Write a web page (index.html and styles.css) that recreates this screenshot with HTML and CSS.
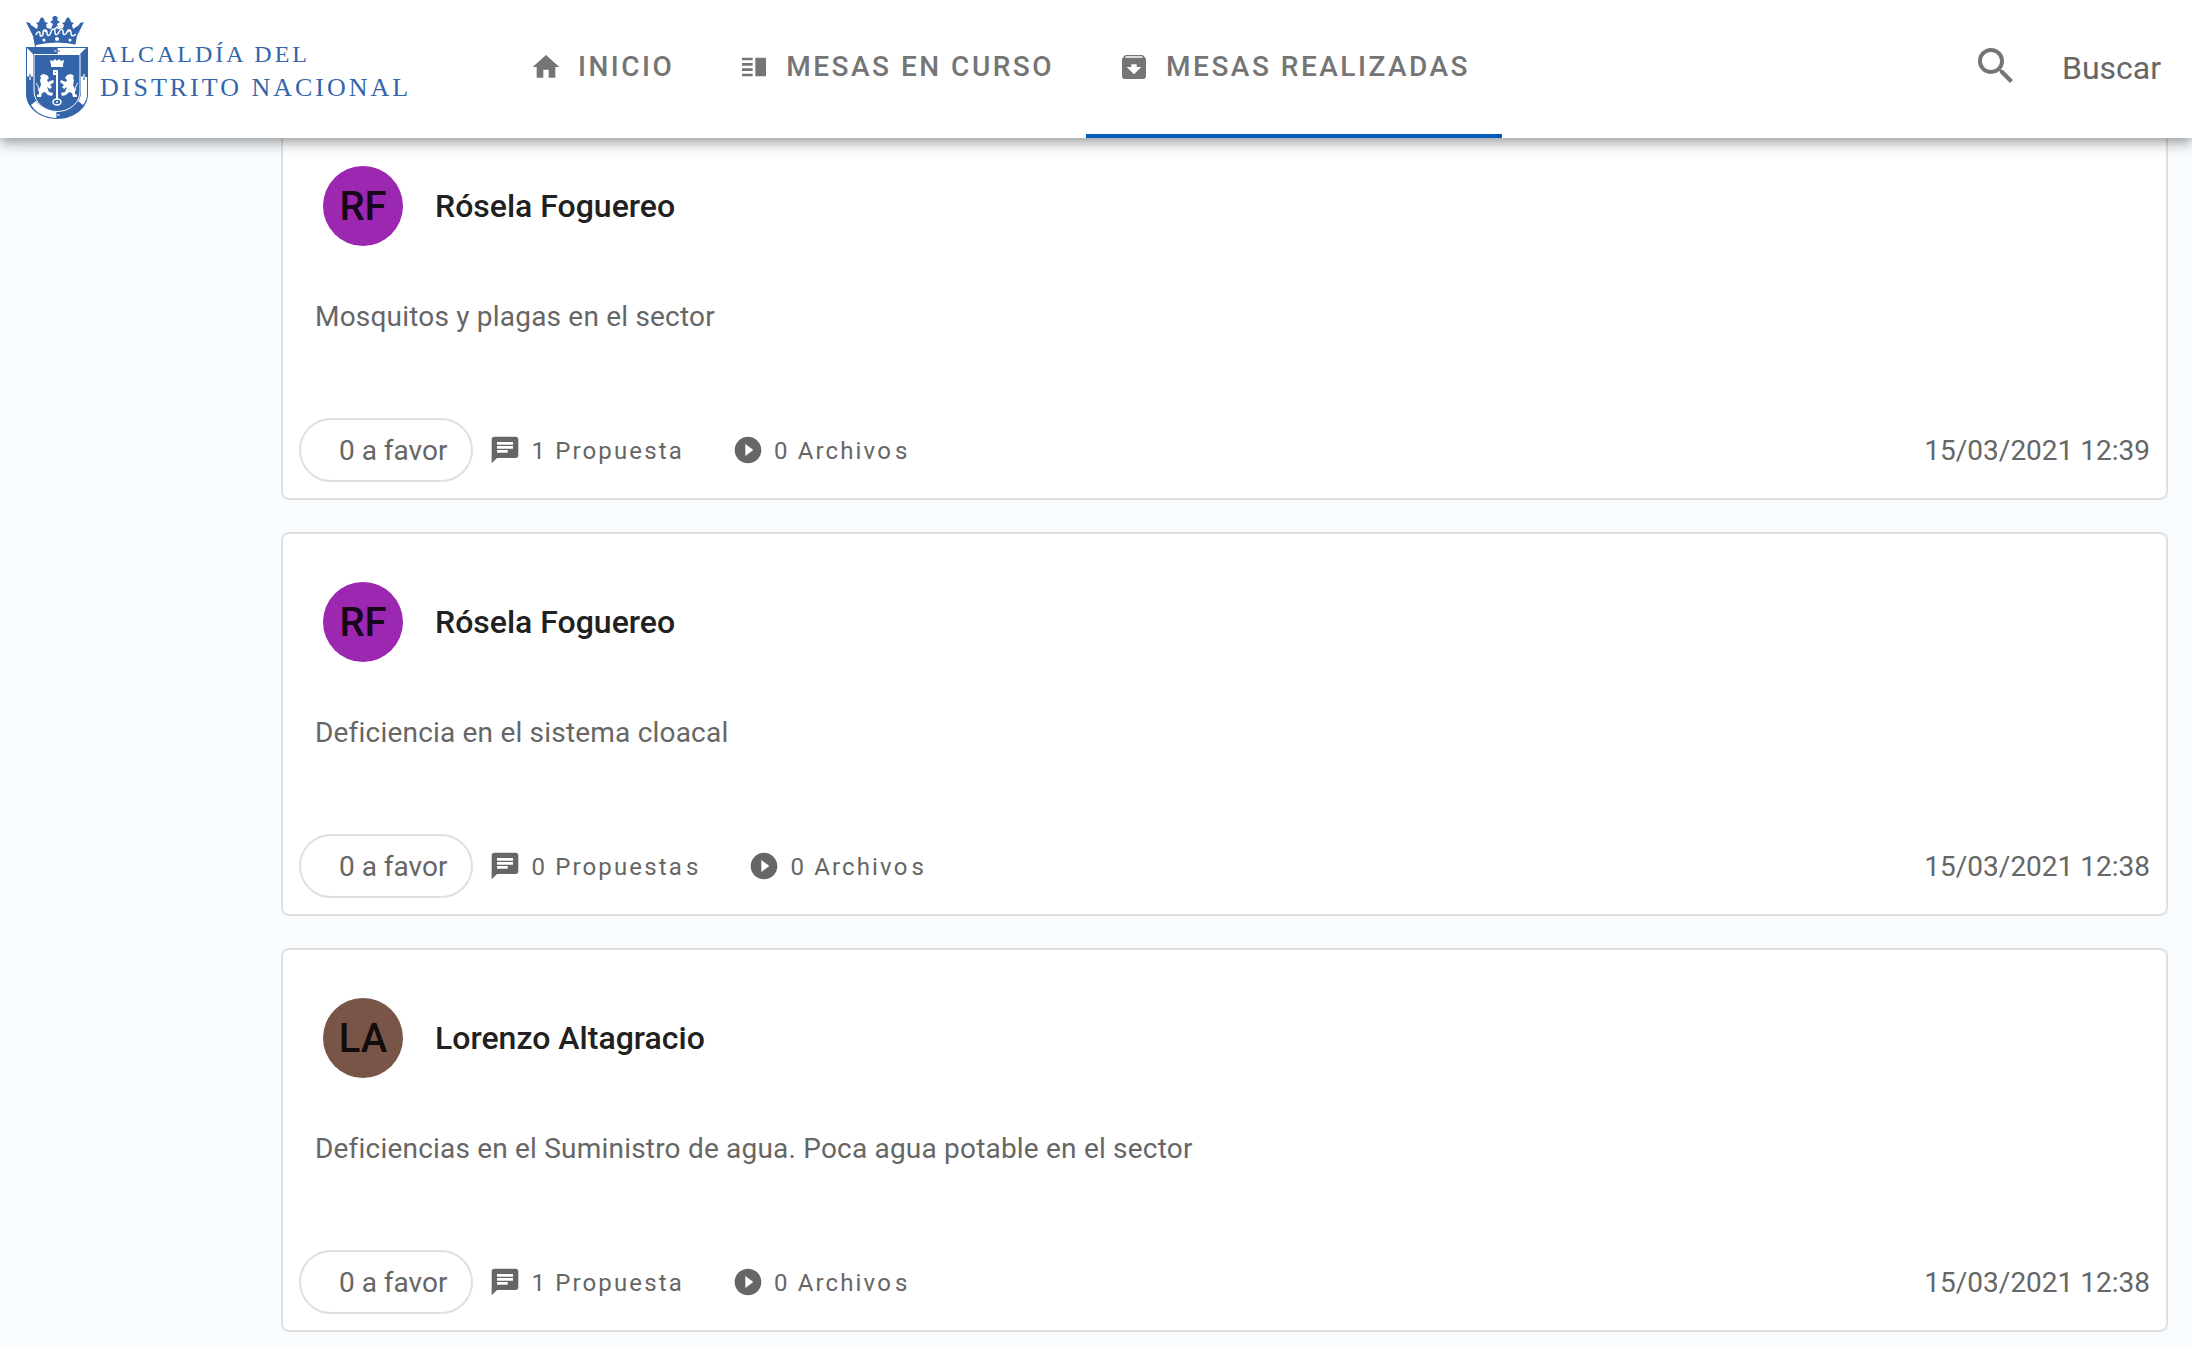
FILE: index.html
```html
<!DOCTYPE html>
<html lang="es">
<head>
<meta charset="utf-8">
<meta name="viewport" content="width=device-width, initial-scale=1">
<title>Mesas realizadas</title>
<link rel="stylesheet" href="styles.css">
</head>
<body>
<svg class="sprite" aria-hidden="true">
  <symbol id="i-comment" viewBox="0 0 24 24"><path d="M20 2H4c-1.100 0-1.990.900-1.990 2L2 22l4-4h14c1.100 0 2-.900 2-2V4c0-1.100-.900-2-2-2zM6 6h12v2H6V6zm8 8H6v-2h8v2zm4-3H6V9h12v2z"/></symbol>
  <symbol id="i-play" viewBox="0 0 24 24"><path d="M12 2C6.480 2 2 6.480 2 12s4.480 10 10 10 10-4.480 10-10S17.520 2 12 2zm-2 14.500v-9l6 4.500-6 4.500z"/></symbol>
</svg>

<header class="topbar">
  <a class="brand" href="#">
    <svg class="crest" viewBox="0 0 62 103" aria-hidden="true">
      <g fill="#3465ab">
        <path d="M9 31L7 20 1 8l-1-2 4 1 1 2 6 4 1-4-2-2 3-1 1-3 2-2 2 2 1 3 3 1-2 2 1 3 4 1 2-5-3-2 3-2-1-2 3-3 3 3-1 2 3 2-3 2 2 5 4-1 1-3-2-2 3-1 1-3 2-2 2 2 1 3 3 1-2 2 1 4 6-4 1-2 4-1-1 2-6 12-2 11Q31 26 9 31z"/>
        <path d="M0 31h62v47c0 14-14 25-31 25S0 92 0 78z"/>
      </g>
      <g fill="none" stroke="#fff" stroke-width="1.500">
        <path d="M10 19c1-4 4-4 4-1s3 3 3-1 4-4 4 0 3 3 4-1 4-4 4 0 3 3 4 0 4-4 4 0 3 3 4 0 4-3 4 1 3 3 5 1M18 14l2 2m9-3l2-2 2 2m9 3l2-2"/>
      </g>
      <g fill="#fff">
        <circle cx="18" cy="24" r="1.500"/><circle cx="31" cy="23" r="2"/><circle cx="44" cy="24" r="1.500"/>
        <path d="M10 29q21-5 42 0v2H10z"/>
        <path d="M31 32h29l-6 6H31z"/>
        <path d="M1 32l6 6v23H1z"/>
        <path d="M61 61h-6v14c0 5-1 7-3 10l5 4c3-4 4-7 4-11z"/>
        <path d="M5 89l5-4c5 7 13 10 21 10v7C20 102 10 97 5 89z"/>
      </g>
      <path d="M8 38.500h46v37c0 11-10 20-23 20S8 86 8 75z" fill="#3465ab" stroke="#fff"/>
      <g fill="#fff">
        <path d="M24 44l3 1 2-2 2 2 2-2 2 2 3-1-1 5H25zM25 49h12v2H25z"/>
        <path d="M30 54h2v30h-2zM27 54h4v2h-2v1h2v2h-4z"/>
      </g>
      <g fill="#fff">
        <path d="M14 60l3-2 4 1 2 3-2 2 1 2 5-2 1 2-4 3 2 2-2 2-3-2 2 5 4 1-1 3-4-1-3-3-3 1-1 4h-4v-2l2-1v-5l2-4-1-5 1-2z"/>
        <path d="M48 60l-3-2-4 1-2 3 2 2-1 2-5-2-1 2 4 3-2 2 2 2 3-2-2 5-4 1 1 3 4-1 3-3 3 1 1 4h4v-2l-2-1v-5l-2-4 1-5-1-2z"/>
      </g>
      <path d="M15 76c-4 0-2-4-3-6s-2-1-1-3M47 76c4 0 2-4 3-6s2-1 1-3" fill="none" stroke="#fff"/>
      <ellipse cx="31" cy="86" rx="4" ry="3" fill="none" stroke="#fff" stroke-width="1.500"/>
      <circle cx="31" cy="86" r="1" fill="#fff"/>
      <g stroke-width="1.200">
        <path d="M28 35h3M28 99h3" stroke="#fff"/><path d="M31 35h3M31 32v6M31 96v6" stroke="#3465ab"/>
        <path d="M4 58v3M1 61h6M58 61v3" stroke="#3465ab"/><path d="M4 61v3M31 99h3M58 58v3M55 61h3" stroke="#fff"/>
      </g>
    </svg>
    <span class="brand-name"><span class="brand-top">ALCALDÍA DEL</span><span>DISTRITO NACIONAL</span></span>
  </a>
  <nav class="tabs">
    <a class="tab" href="#"><svg class="icon" viewBox="0 0 24 24"><path d="M10 20v-6h4v6h5v-8h3L12 3 2 12h3v8z"/></svg>INICIO</a>
    <a class="tab" href="#"><svg class="icon" viewBox="0 0 24 24"><path d="M3 15h8v-2H3v2zm0 4h8v-2H3v2zm0-8h8V9H3v2zm0-6v2h8V5H3zm10 0h8v14h-8V5z"/></svg>MESAS EN CURSO</a>
    <a class="tab tab-active" href="#" aria-current="page"><svg class="icon" viewBox="0 0 24 24"><path d="M20.540 5.230l-1.390-1.680C18.880 3.210 18.470 3 18 3H6c-.470 0-.880.210-1.160.550L3.460 5.230C3.170 5.570 3 6.020 3 6.500V19c0 1.100.900 2 2 2h14c1.100 0 2-.900 2-2V6.500c0-.480-.170-.930-.460-1.270zM12 17.500L6.500 12H10v-2h4v2h3.500L12 17.500zM5.120 5l.810-1h12l.940 1H5.120z"/></svg>MESAS REALIZADAS</a>
  </nav>
  <form class="search" role="search">
    <label for="q" aria-label="Buscar"><svg class="search-icon" viewBox="0 0 24 24"><path d="M9.500 3A6.500 6.500 0 0 1 16 9.500c0 1.610-.590 3.090-1.560 4.230l.270.270h.790l5 5-1.500 1.500-5-5v-.790l-.270-.270A6.516 6.516 0 0 1 9.500 16a6.500 6.500 0 0 1 0-13m0 2C7 5 5 7 5 9.500S7 14 9.500 14 14 12 14 9.500 12 5 9.500 5z"/></svg></label>
    <input id="q" type="text" placeholder="Buscar">
  </form>
</header>

<main class="feed">
  <article class="card">
    <header class="author"><span class="avatar purple">RF</span><h2>Rósela Foguereo</h2></header>
    <p class="topic">Mosquitos y plagas en el sector</p>
    <footer class="actions">
      <button class="chip" type="button">0 a favor</button>
      <span class="stat"><svg class="icon"><use href="#i-comment"/></svg><span>1 Propuesta</span></span>
      <span class="stat"><svg class="icon"><use href="#i-play"/></svg><span>0 Archivo<span class="plural">s</span></span></span>
      <time datetime="2021-03-15T12:39">15/03/2021 12:39</time>
    </footer>
  </article>
  <article class="card">
    <header class="author"><span class="avatar purple">RF</span><h2>Rósela Foguereo</h2></header>
    <p class="topic">Deficiencia en el sistema cloacal</p>
    <footer class="actions">
      <button class="chip" type="button">0 a favor</button>
      <span class="stat"><svg class="icon"><use href="#i-comment"/></svg><span>0 Propuesta<span class="plural">s</span></span></span>
      <span class="stat"><svg class="icon"><use href="#i-play"/></svg><span>0 Archivo<span class="plural">s</span></span></span>
      <time datetime="2021-03-15T12:38">15/03/2021 12:38</time>
    </footer>
  </article>
  <article class="card">
    <header class="author"><span class="avatar brown">LA</span><h2>Lorenzo Altagracio</h2></header>
    <p class="topic">Deficiencias en el Suministro de agua. Poca agua potable en el sector</p>
    <footer class="actions">
      <button class="chip" type="button">0 a favor</button>
      <span class="stat"><svg class="icon"><use href="#i-comment"/></svg><span>1 Propuesta</span></span>
      <span class="stat"><svg class="icon"><use href="#i-play"/></svg><span>0 Archivo<span class="plural">s</span></span></span>
      <time datetime="2021-03-15T12:38">15/03/2021 12:38</time>
    </footer>
  </article>
</main>
</body>
</html>
```
FILE: styles.css
```css
* { box-sizing: border-box; }

body {
  margin: 0;
  background: #f8fcff;
  color: #666;
  font: 28px/44px Roboto, sans-serif;
}

h2, p { margin: 0; }

.sprite { display: none; }

.icon {
  flex: none;
  width: 32px;
  height: 32px;
  fill: currentColor;
}

/* Top bar */
.topbar {
  position: sticky;
  top: 0;
  z-index: 1;
  display: flex;
  height: 138px;
  padding: 0 24px;
  background: #fff;
  box-shadow: 0 4px 8px -2px rgba(0, 0, 0, .2), 0 8px 10px rgba(0, 0, 0, .14), 0 2px 20px rgba(0, 0, 0, .12);
}

.brand {
  display: flex;
  align-items: center;
  gap: 12px;
  width: 474px;
  padding: 0 2px 4px;
  color: #3465ab;
  text-decoration: none;
}

.crest { width: 62px; height: 103px; }

.brand-name {
  display: grid;
  padding-top: 8px;
  font: 26px/33px "Liberation Serif", serif;
  letter-spacing: 3px;
  white-space: nowrap;
}

.brand-top { font-size: 24px; }

.tabs { display: flex; }

.tab {
  display: flex;
  align-items: center;
  gap: 16px;
  padding: 0 32px;
  border-bottom: 4px solid transparent;
  color: #757575;
  font-weight: 500;
  letter-spacing: .0893em;
  text-decoration: none;
  white-space: nowrap;
}

.tab-active { border-color: #005cbb; }

.search {
  display: flex;
  align-items: center;
  gap: 42px;
  margin-left: auto;
  padding-bottom: 6px;
}

.search label { display: flex; }

.search-icon { width: 48px; height: 48px; fill: #757575; }

.search input {
  width: 106px;
  padding: 4px 0 0;
  border: 0;
  outline: 0;
  background: none;
  color: #666;
  font: 32px/40px Roboto, sans-serif;
}

.search input::placeholder { color: #666; opacity: 1; }

/* Proposal list; the first card starts under the top bar */
.feed {
  display: grid;
  gap: 32px;
  margin-top: -22px;
  padding: 0 24px 14px 281px;
}

.card {
  border: 2px solid #e0e0e0;
  border-radius: 8px;
  background: #fff;
}

.author {
  display: flex;
  align-items: center;
  gap: 32px;
  padding: 48px 40px;
}

.avatar {
  display: grid;
  place-items: center;
  width: 80px;
  height: 80px;
  padding-top: 2px;
  border-radius: 50%;
  color: rgba(0, 0, 0, .87);
  font-size: 40px;
  font-weight: 500;
}

.purple { background: #9c27b0; }
.brown { background: #795548; }

.author h2 {
  color: #212121;
  font-size: 32px;
  font-weight: 500;
}

.topic {
  padding: 1px 32px 0;
  letter-spacing: .0071em;
}

.actions {
  display: flex;
  align-items: center;
  padding: 79px 16px 16px;
}

.chip {
  height: 64px;
  padding: 2px 24px 0 38px;
  border: 2px solid #e0e0e0;
  border-radius: 32px;
  background: #fff;
  color: #666;
  font: inherit;
}

.stat {
  display: flex;
  align-items: center;
  gap: 10px;
  margin: 0 32px 0 16px;
  font-size: 24px;
  letter-spacing: .0893em;
}

.stat > span { padding-top: 2px; }

.plural { margin-left: 2px; }

.actions time {
  margin-left: auto;
  padding-top: 2px;
}
```
